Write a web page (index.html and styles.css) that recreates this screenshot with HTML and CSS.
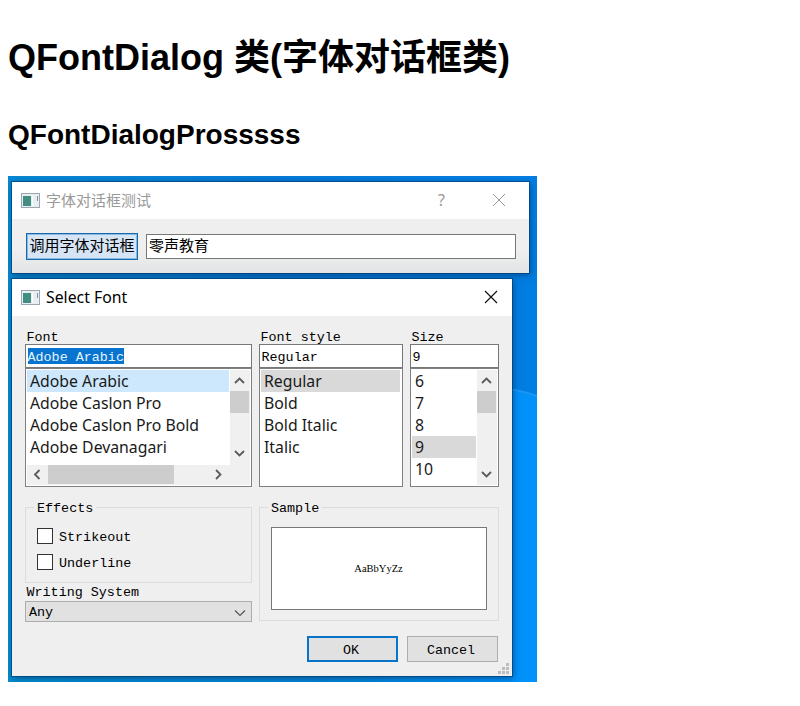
FILE: index.html
```html
<!DOCTYPE html>
<html lang="zh-CN">
<head>
<meta charset="utf-8">
<title>QFontDialog</title>
<link rel="stylesheet" href="styles.css">
</head>
<body>
<h1>QFontDialog 类(字体对话框类)</h1>
<h2>QFontDialogProsssss</h2>
<div class="desktop">
  <svg class="wallpaper" width="529" height="506" viewBox="0 0 529 506">
    <defs>
      <linearGradient id="wp" x1="0" y1="0" x2="1" y2="0"><stop offset="0" stop-color="#0788d2"/><stop offset=".5" stop-color="#0479d6"/><stop offset="1" stop-color="#007ee2"/></linearGradient>
      <linearGradient id="wb" x1="0" y1="0" x2="1" y2="0"><stop offset="0" stop-color="#058bd0"/><stop offset=".6" stop-color="#0485d8"/><stop offset="1" stop-color="#0092fb"/></linearGradient>
    </defs>
    <rect width="529" height="506" fill="url(#wp)"/>
    <path d="M0 213H500Q516 215 529 220V506H0Z" fill="url(#wb)"/>
    <path d="M500 213Q516 215 529 220" fill="none" stroke="#1a98f6" stroke-width="2"/>
  </svg>
  <section class="window tester">
    <header class="titlebar inactive">
      <svg class="app" width="19" height="16"><rect x=".5" y=".5" width="18" height="14" fill="#e8eef2" stroke="#9aa7b0"/><rect x="2" y="3" width="8" height="10" fill="#438e80"/><path d="M11.500 3V13" stroke="#fff"/><path d="M16.500 3V8" stroke="#82929b"/></svg>
      <span class="caption">字体对话框测试</span>
      <span class="help">?</span>
      <svg class="close" width="14" height="14"><path d="M1 1L13 13M13 1L1 13" stroke="#999"/></svg>
    </header>
    <div class="tester-body">
      <div class="call">调用字体对话框</div>
      <div class="edit">零声教育</div>
    </div>
  </section>
  <section class="window dialog">
    <header class="titlebar">
      <svg class="app" width="19" height="16"><rect x=".5" y=".5" width="18" height="14" fill="#e8eef2" stroke="#9aa7b0"/><rect x="2" y="3" width="8" height="10" fill="#438e80"/><path d="M11.500 3V13" stroke="#fff"/><path d="M16.500 3V8" stroke="#82929b"/></svg>
      <span class="caption latin">Select Font</span>
      <svg class="close" width="14" height="14"><path d="M1 1L13 13M13 1L1 13" stroke="#111" stroke-width="1.200"/></svg>
    </header>
    <div class="dialog-body">
      <div class="pickers">
        <div class="picker">
          <div class="label">Font</div>
          <div class="field"><span class="selected">Adobe Arabic</span></div>
          <div class="list family">
            <div class="viewport">
              <div class="item current">Adobe Arabic</div><div class="item">Adobe Caslon Pro</div><div class="item">Adobe Caslon Pro Bold</div><div class="item">Adobe Devanagari</div><div class="item partial">Adobe Garamond Pro</div>
            </div>
            <div class="vscroll">
              <svg width="19" height="21"><path d="M5 13L9.500 8.500L14 13"/></svg><div class="thumb"></div><svg class="end" width="19" height="21"><path d="M5 7L9.500 11.500L14 7"/></svg>
            </div>
            <div class="hscroll">
              <svg width="21" height="19"><path d="M12.500 5L8 9.500L12.500 14"/></svg><div class="hthumb"></div><svg class="right" width="21" height="19"><path d="M8 5L12.500 9.500L8 14"/></svg>
            </div>
          </div>
        </div>
        <div class="picker">
          <div class="label">Font style</div>
          <div class="field">Regular</div>
          <div class="list">
            <div class="viewport"><div class="item chosen">Regular</div><div class="item">Bold</div><div class="item">Bold Italic</div><div class="item">Italic</div></div>
          </div>
        </div>
        <div class="picker">
          <div class="label">Size</div>
          <div class="field">9</div>
          <div class="list sizes">
            <div class="viewport"><div class="item">6</div><div class="item">7</div><div class="item">8</div><div class="item chosen">9</div><div class="item">10</div></div>
            <div class="vscroll">
              <svg width="19" height="21"><path d="M5 13L9.500 8.500L14 13"/></svg><div class="thumb"></div><svg class="end" width="19" height="21"><path d="M5 8L9.500 12.500L14 8"/></svg>
            </div>
          </div>
        </div>
      </div>
      <div class="lower">
        <div class="options">
          <div class="group effects">
            <span class="legend">Effects</span>
            <div class="check"><i></i>Strikeout</div>
            <div class="check"><i></i>Underline</div>
          </div>
          <div class="label system">Writing System</div>
          <div class="combo">Any<svg width="12" height="8"><path d="M1 1.500L6 6.500L11 1.500" fill="none" stroke="#555" stroke-width="1.200"/></svg></div>
        </div>
        <div class="group sample">
          <span class="legend">Sample</span>
          <div class="preview">AaBbYyZz</div>
        </div>
      </div>
      <div class="buttons"><div class="button default">OK</div><div class="button">Cancel</div></div>
    </div>
    <svg class="grip" width="11" height="11"><path d="M8 0h3v3h-3zM8 4h3v3h-3zM8 8h3v3h-3zM4 4h3v3h-3zM4 8h3v3h-3zM0 8h3v3h-3z" fill="#bdbdbd"/></svg>
  </section>
</div>
</body>
</html>
```
FILE: styles.css
```css
* { box-sizing: border-box; }
body { margin: 0 8px; background: #fff; color: #000; font-family: "Liberation Sans", "Noto Sans CJK SC", sans-serif; }
h1 { margin: 31px 0 0; font-size: 36px; line-height: 54px; height: 54px; white-space: nowrap; }
h2 { margin: 34px 0 0; font-size: 28px; line-height: 32px; height: 32px; }
svg { display: block; flex: none; }
.desktop { position: relative; width: 529px; height: 506px; margin-top: 25px; overflow: hidden; font: 13.4px/16px "Liberation Mono", "Noto Sans CJK SC", monospace; white-space: nowrap; }
.window { position: absolute; left: 4px; background: #efefef; box-shadow: 0 0 0 1px rgba(0, 60, 110, .65), 1px 2px 7px rgba(0, 25, 65, .5); }
.tester { top: 6px; width: 517px; height: 91px; background: linear-gradient(#efefef 75%, #e2e4e5); }
.dialog { top: 103px; width: 500px; height: 397px; }
.titlebar { display: flex; align-items: center; height: 37px; padding: 0 14px 0 9px; background: #fff; font: 15px/20px "Noto Sans", "Noto Sans CJK SC", sans-serif; }
.caption { margin: -1px auto 0 6px; }
.close { margin-top: -1px; }
.latin { font-size: 15.8px; }
.inactive { color: #999; padding-right: 23px; }
.help { margin: -1px 47px 0 0; font-size: 16px; }
.tester-body { display: flex; gap: 8px; padding: 14px 13px 0 14px; }
.call { width: 112px; height: 27px; border: 1px solid #1769ae; outline: 1px solid #8bb9df; outline-offset: -2px; background: #d5e5f5; text-align: center; font-size: 15px; line-height: 27px; }
.edit { flex: 1; height: 25px; margin-top: 1px; border: 1px solid #777; background: #fff; padding-left: 2px; font-size: 15px; line-height: 26px; }
.dialog-body { padding: 12px 13px 0; }
.pickers { display: grid; grid-template-columns: 227px 144px 89px; gap: 7px; }
.label { height: 16px; line-height: 20px; padding-left: 1.5px; }
.field { height: 24px; border: 1px solid #777; background: #fff; padding: 3px 1.5px; line-height: 19px; }
.selected { display: inline-block; height: 16px; line-height: 19px; background: #0874cf; color: #e3f4ff; vertical-align: top; }
.list { display: flex; height: 119px; padding: 1px; border: 1px solid #808080; background: #fff; }
.family { flex-wrap: wrap; align-content: flex-start; }
.viewport { flex: 1; overflow: hidden; height: 115px; font: 15.8px/22px "Noto Sans", sans-serif; color: #191919; }
.family .viewport { flex: 0 0 203px; height: 95px; }
.item { height: 22px; padding-left: 3px; }
.partial { font-size: 15.2px; line-height: 24px; }
.current { background: #cde8fc; margin-right: 1px; }
.chosen { background: #d9d9d9; margin-right: 1px; }
.vscroll { display: flex; flex-direction: column; width: 20px; height: 115px; background: #f0f0f0; }
.family .vscroll { height: 95px; }
.vscroll path, .hscroll path { fill: none; stroke: #5b5b5b; stroke-width: 1.8; }
.thumb { width: 19px; height: 22px; background: #cdcdcd; }
.end { margin-top: auto; }
.hscroll { display: flex; width: 223px; height: 20px; background: #f0f0f0; }
.hthumb { width: 126px; height: 19px; background: #cdcdcd; }
.right { margin-left: 34px; }
.lower { display: flex; gap: 7px; padding-top: 20px; }
.options { width: 227px; }
.group { position: relative; border: 1px solid #dcdcdc; }
.legend { position: absolute; left: 8px; top: -8px; padding: 0 3px; background: #efefef; line-height: 18px; }
.effects { height: 76px; padding: 20px 0 0 11px; }
.check { display: flex; gap: 6px; height: 26px; line-height: 20px; }
.check i { width: 16px; height: 16px; border: 1px solid #333; background: #fff; }
.system { height: 18px; }
.combo { display: flex; justify-content: space-between; align-items: center; height: 21px; padding: 2px 5px 0 3px; border: 1px solid #adadad; background: #e1e1e1; }
.sample { width: 240px; height: 114px; padding: 19px 11px; }
.preview { height: 83px; border: 1px solid #777; background: #fff; text-align: center; font: 10.5px/82px "Liberation Serif", serif; padding-right: 1px; }
.buttons { display: flex; justify-content: flex-end; gap: 9px; padding: 15px 1px 0 0; margin-top: -1px; }
.button { width: 91px; height: 26px; border: 1px solid #adadad; background: #e1e1e1; text-align: center; line-height: 28px; padding-right: 3px; }
.default { border: 2px solid #0874c7; line-height: 26px; }
.grip { position: absolute; right: 3px; bottom: 2px; }
```
